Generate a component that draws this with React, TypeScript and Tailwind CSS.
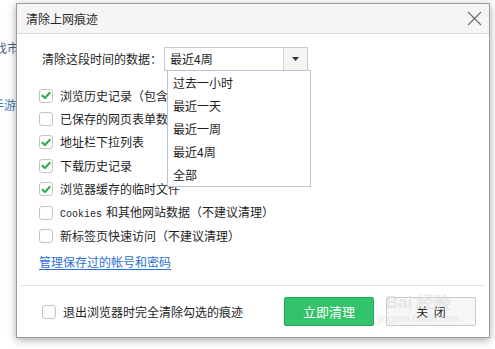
import React from "react";

const font = { fontFamily: '"Noto Sans CJK SC", "Liberation Sans", sans-serif' };

function Box({ checked }: { checked?: boolean }) {
  return (
    <span className="flex h-[14px] w-[14px] shrink-0 items-center justify-center rounded-[3px] border border-[#c4c4c4] bg-white">
      {checked && (
        <svg width="10" height="9" viewBox="0 0 10 9">
          <path d="M1.5 4.8 L4 7 L8.6 2" fill="none" stroke="#27b04a" strokeWidth="2" strokeLinecap="square" />
        </svg>
      )}
    </span>
  );
}

function Row({ checked, children }: { checked?: boolean; children: React.ReactNode }) {
  return (
    <div className="flex h-[23.4px] items-center gap-[7px] whitespace-nowrap">
      <Box checked={checked} />
      <span className="text-[12px] leading-none text-[#1e1e1e]">{children}</span>
    </div>
  );
}

export default function App() {
  const options = ["过去一小时", "最近一天", "最近一周", "最近4周", "全部"];
  return (
    <div className="relative h-[349px] w-[495px] overflow-hidden bg-white" style={font}>
      <span className="absolute left-[-5px] top-[39px] text-[12px] text-[#4a6384]">找市场</span>
      <span className="absolute left-[-8px] top-[96px] text-[12px] text-[#3d78b2]">手游戏</span>

      <div className="relative z-10 ml-[16px] mt-[3px] flex h-[335px] w-[474px] flex-col border border-[#9c9c9c] bg-white shadow-[0_2px_8px_rgba(0,0,0,0.35)]">
        {/* title bar */}
        <div className="flex h-[30px] shrink-0 items-center justify-between border-b border-[#dadada] bg-[#f5f5f5] pl-[9px] pr-[7px]">
          <span className="text-[12px] text-[#2a2a2a]">清除上网痕迹</span>
          <svg width="15" height="15" viewBox="0 0 15 15">
            <path d="M1 1 L14 14 M14 1 L1 14" stroke="#6a6a6a" strokeWidth="1.1" />
          </svg>
        </div>

        {/* body */}
        <div className="relative flex flex-1 flex-col pl-[22px] pt-[13px]">
          <div className="flex h-[24px] items-center">
            <span className="w-[125px] pl-[3px] text-[12px] text-[#1e1e1e]">清除这段时间的数据：</span>
            <div className="flex h-[24px] w-[144px] items-stretch border border-[#c3cad4] bg-white">
              <span className="flex flex-1 items-center pl-[5px] text-[12px] text-[#1e1e1e]">最近4周</span>
              <span className="flex w-[24px] items-center justify-center border-l border-[#d6d6d6] bg-[#f4f4f4]">
                <svg width="7" height="4" viewBox="0 0 7 4">
                  <path d="M0 0 H7 L3.5 4 Z" fill="#333" />
                </svg>
              </span>
            </div>
          </div>

          <div className="mt-[13px] flex flex-col">
            <Row checked>浏览历史记录（包含已关闭的标签页）</Row>
            <Row>已保存的网页表单数据</Row>
            <Row checked>地址栏下拉列表</Row>
            <Row checked>下载历史记录</Row>
            <Row checked>浏览器缓存的临时文件</Row>
            <Row>
              <span className="mr-[4px] text-[10px]" style={{ fontFamily: '"Liberation Mono", monospace' }}>Cookies</span>
              和其他网站数据（不建议清理）
            </Row>
            <Row>新标签页快速访问（不建议清理）</Row>
          </div>

          <a className="mt-[6px] w-fit text-[12px] leading-[16px] text-[#2b6fd3] underline underline-offset-2">管理保存过的帐号和密码</a>

          {/* dropdown list */}
          <div className="absolute left-[150px] top-[36px] z-20 flex h-[117px] w-[144px] flex-col border border-[#b9c4d2] bg-white">
            {options.map((o) => (
              <div key={o} className="flex h-[23px] items-center pl-[5px] text-[12px] text-[#1e1e1e]">
                {o}
              </div>
            ))}
          </div>
        </div>

        {/* footer */}
        <div className="mx-[4px] border-t border-[#e2e2e2]" />
        <div className="relative flex h-[51px] shrink-0 items-center pl-[25px] pr-[13px]">
          <Box />
          <span className="ml-[7px] text-[12px] text-[#1e1e1e]">退出浏览器时完全清除勾选的痕迹</span>
          <div className="ml-auto flex gap-[12px]">
            <button className="h-[29px] w-[90px] rounded-[2px] border border-[#23a857] bg-[#33c46b] text-[13px] text-white">立即清理</button>
            <button className="h-[29px] w-[90px] rounded-[2px] border border-[#c9c9c9] bg-[#f6f6f6] text-[12px] text-[#1e1e1e]">关&nbsp;&nbsp;闭</button>
          </div>
          <div className="pointer-events-none absolute left-[361px] top-[8px] flex flex-col items-center leading-none text-[#dddddd] opacity-60">
            <span className="text-[17px] font-bold" style={{ fontFamily: '"Liberation Sans", sans-serif' }}>Bai 经验</span>
            <span className="mt-[3px] text-[10px]" style={{ fontFamily: '"Liberation Sans", sans-serif' }}>jingyan.baidu.com</span>
          </div>
        </div>
      </div>
    </div>
  );
}
